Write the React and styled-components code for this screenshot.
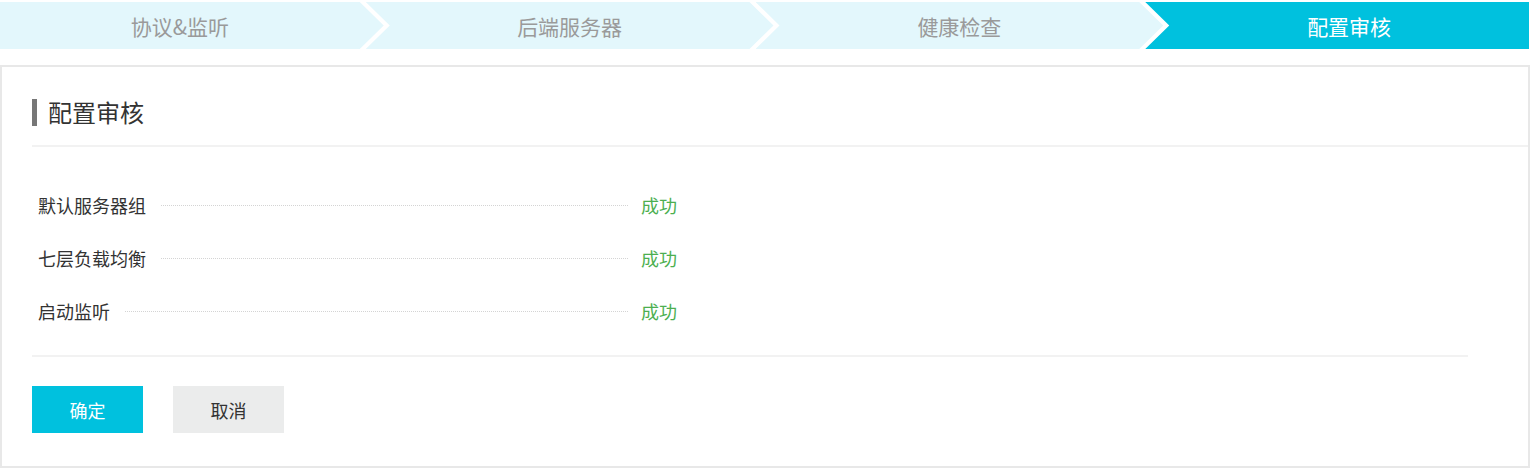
import React from "react";
import styled, { createGlobalStyle } from "styled-components";

const GlobalStyle = createGlobalStyle`
  html, body {
    margin: 0;
    padding: 0;
    background: #ffffff;
    font-family: "Noto Sans CJK SC", "Noto Sans", "Liberation Sans", sans-serif;
  }
`;

const Page = styled("div")({
  width: "1531px",
  paddingTop: "2px",
  boxSizing: "border-box",
});

const StepBar = styled("div")({
  display: "flex",
  width: "1529px",
  height: "47px",
});

const ARROW = 24;

// first and last steps lack the notch / point, so they are one arrow shorter
const Step = styled("div")`
  flex: 1 1 ${(props) => (props.first || props.last ? 383 : 407)}px;
  min-width: 0;
  margin-left: ${(props) => (props.first ? "0" : "-18px")};
  padding-left: ${(props) => (props.first ? 0 : ARROW)}px;
  padding-right: ${(props) => (props.last ? 0 : ARROW)}px;
  box-sizing: border-box;
  display: flex;
  align-items: center;
  justify-content: center;
  background: ${(props) => (props.active ? "#00c1de" : "#e3f7fc")};
  color: ${(props) => (props.active ? "#ffffff" : "#9a9a9a")};
  font-size: 21px;
  clip-path: polygon(
    0 0,
    ${(props) => (props.last ? "100% 0, 100% 100%" : `calc(100% - ${ARROW}px) 0, 100% 50%, calc(100% - ${ARROW}px) 100%`)},
    0 100%
    ${(props) => (props.first ? "" : `, ${ARROW}px 50%`)}
  );
`;

const Panel = styled("div")({
  marginTop: "16px",
  width: "1530px",
  border: "2px solid #e8e8e8",
  boxSizing: "border-box",
  background: "#ffffff",
});

const Header = styled("div")({
  display: "flex",
  alignItems: "center",
  marginLeft: "30px",
  padding: "32px 0 19px",
  borderBottom: "2px solid #f2f2f2",
});

const TitleMark = styled("span")({
  width: "5px",
  height: "27px",
  background: "#777777",
  marginRight: "11px",
});

const Title = styled("h2")({
  margin: "-3px 0 0",
  fontSize: "24px",
  fontWeight: 400,
  lineHeight: "27px",
  color: "#333333",
});

const Rows = styled("div")({
  padding: "31px 0 2px 36px",
});

const Row = styled("div")({
  display: "flex",
  alignItems: "center",
  height: "53px",
});

const LeaderBox = styled("div")({
  display: "flex",
  alignItems: "center",
  width: "590px",
});

const Label = styled("span")({
  fontSize: "18px",
  color: "#333333",
  whiteSpace: "nowrap",
});

const Leader = styled("span")({
  flex: 1,
  marginLeft: "15px",
  marginTop: "2px",
  borderTop: "1px dotted #d4d4d4",
});

const Value = styled("span")`
  margin-left: 13px;
  font-size: 18px;
  color: ${(props) => (props.ok ? "#4caf50" : "#e04040")};
`;

const Footer = styled("div")({
  display: "flex",
  gap: "30px",
  margin: "16px 60px 0 30px",
  padding: "29px 0 33px",
  borderTop: "2px solid #f2f2f2",
});

const Button = styled("button")`
  width: 111px;
  height: 47px;
  border: none;
  padding: 0;
  font-family: inherit;
  font-size: 18px;
  cursor: pointer;
  background: ${(props) => (props.primary ? "#00c1de" : "#ebecec")};
  color: ${(props) => (props.primary ? "#ffffff" : "#333333")};
`;

const steps = ["协议&监听", "后端服务器", "健康检查", "配置审核"];

const results = [
  { name: "默认服务器组", ok: true },
  { name: "七层负载均衡", ok: true },
  { name: "启动监听", ok: true },
];

const App = () => {
  return (
    <Page>
      <GlobalStyle />
      <StepBar>
        {steps.map((s, i) => (
          <Step
            key={s}
            first={i === 0}
            last={i === steps.length - 1}
            active={i === steps.length - 1}
          >
            {s}
          </Step>
        ))}
      </StepBar>
      <Panel>
        <Header>
          <TitleMark />
          <Title>配置审核</Title>
        </Header>
        <Rows>
          {results.map((r) => (
            <Row key={r.name}>
              <LeaderBox>
                <Label>{r.name}</Label>
                <Leader />
              </LeaderBox>
              <Value ok={r.ok}>{r.ok ? "成功" : "失败"}</Value>
            </Row>
          ))}
        </Rows>
        <Footer>
          <Button primary>确定</Button>
          <Button>取消</Button>
        </Footer>
      </Panel>
    </Page>
  );
};

export default App;
